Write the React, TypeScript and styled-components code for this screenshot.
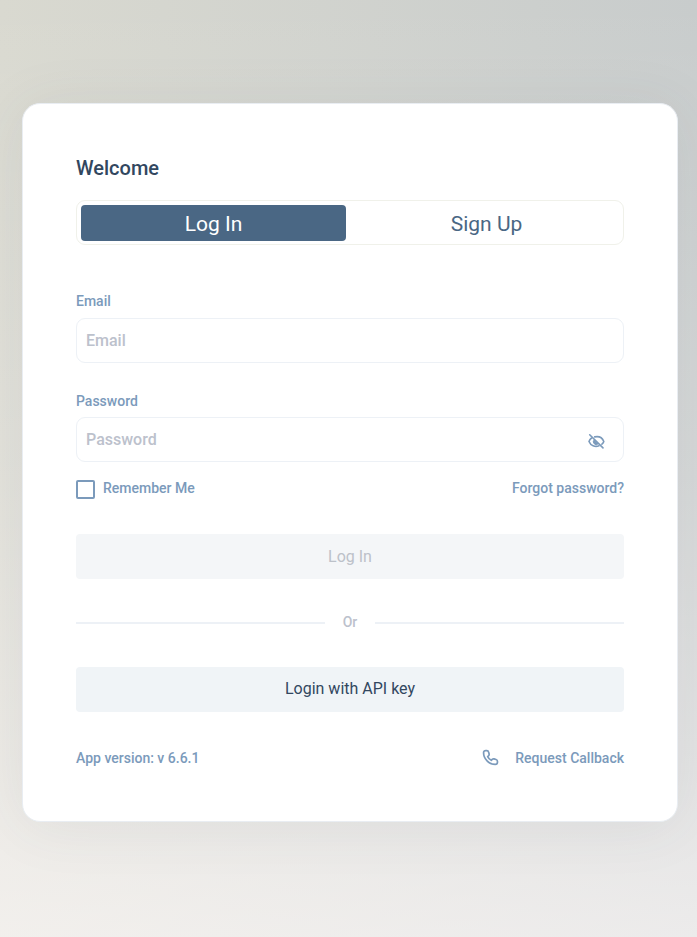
import React, { useState } from "react";
import styled, { createGlobalStyle } from "styled-components";

const GlobalStyle = createGlobalStyle`
  *, *::before, *::after { box-sizing: border-box; }
  body { margin: 0; }
  body, button, input { font-family: Roboto, "Liberation Sans", sans-serif; }
`;

const Page = styled.main`
  min-height: 100vh;
  padding: 103px 19px 64px 22px;
  background:
    linear-gradient(to bottom, rgba(255, 251, 251, 0) 0%, rgba(255, 251, 251, 0.25) 50%, rgba(255, 251, 251, 0.66) 100%),
    linear-gradient(to right, #d9d9d0 0%, #c8cccc 100%);
`;

const Card = styled.section`
  display: flex;
  flex-direction: column;
  max-width: 656px;
  margin: 0 auto;
  padding: 52px 53px 55px;
  background: #ffffff;
  border: 1px solid #e9edf2;
  border-radius: 18px;
  box-shadow: 0 4px 60px rgba(70, 80, 90, 0.08);
`;

const Title = styled.h1`
  margin: 0 0 20px;
  font-size: 20px;
  line-height: 24px;
  font-weight: 500;
  color: #32475f;
`;

const Tabs = styled.div`
  display: grid;
  grid-template-columns: 1fr 1fr;
  gap: 8px;
  height: 45px;
  padding: 4px 4px 3px;
  border: 1px solid #f0f1ea;
  border-radius: 9px;
`;

const Tab = styled.button<{ $active: boolean }>`
  padding: 2px 0 0;
  border: 0;
  border-radius: 4px;
  background: ${(p) => (p.$active ? "#4a6784" : "transparent")};
  color: ${(p) => (p.$active ? "#ffffff" : "#4a6784")};
  font-size: 21px;
  line-height: 24px;
  cursor: pointer;
`;

const Form = styled.form`
  display: flex;
  flex-direction: column;
  margin-top: 48px;
`;

const Field = styled.div`
  display: flex;
  flex-direction: column;
  gap: 9px;
  & + & { gap: 8px; margin-top: 30px; }
`;

const Label = styled.label`
  font-size: 14px;
  line-height: 16px;
  font-weight: 500;
  color: #7b9abb;
`;

const InputFrame = styled.div`
  display: flex;
  align-items: center;
  height: 45px;
  padding: 0 18px 0 9px;
  border: 1px solid #edf1f6;
  border-radius: 9px;
`;

const Input = styled.input`
  flex: 1;
  min-width: 0;
  padding: 0;
  border: 0;
  outline: 0;
  background: transparent;
  font-size: 16px;
  line-height: 20px;
  font-weight: 500;
  color: #32475f;
  &::placeholder { color: #bcc1cc; opacity: 1; }
`;

const IconButton = styled.button`
  display: flex;
  padding: 4px 0 0;
  border: 0;
  background: transparent;
  color: #7b9abb;
  cursor: pointer;
`;

const Row = styled.div`
  display: flex;
  align-items: center;
  justify-content: space-between;
`;

const Options = styled(Row)`
  align-items: flex-start;
  margin: 18px 0 35px;
`;

const Remember = styled(Label)`
  display: flex;
  align-items: flex-start;
  gap: 8px;
`;

const Checkbox = styled.input`
  appearance: none;
  width: 19px;
  height: 19px;
  margin: 0;
  border: 2px solid #7b9abb;
  border-radius: 2px;
  &:checked { background: #7b9abb; box-shadow: inset 0 0 0 2px #ffffff; }
`;

const Link = styled.a`
  display: flex;
  align-items: center;
  gap: 16px;
  font-size: 14px;
  line-height: 16px;
  font-weight: 500;
  color: #7b9abb;
  text-decoration: none;
`;

const ActionButton = styled.button<{ $muted?: boolean }>`
  height: 45px;
  padding: ${(p) => (p.$muted ? "0" : "0 0 2px")};
  border: 0;
  border-radius: 4px;
  background: ${(p) => (p.$muted ? "#f4f6f8" : "#f0f4f7")};
  color: ${(p) => (p.$muted ? "#bcc1c9" : "#32475f")};
  font-size: 16px;
  line-height: 20px;
`;

const Divider = styled.div`
  display: flex;
  align-items: center;
  gap: 18px;
  margin: 35px 0 37px;
  font-size: 14px;
  line-height: 16px;
  font-weight: 500;
  color: #bcc1cc;
  &::before, &::after { content: ""; flex: 1; height: 2px; margin-top: 2px; background: #edf1f6; }
`;

const Footer = styled(Row)`
  margin-top: 37px;
`;

const Version = styled.span`
  font-size: 14px;
  line-height: 16px;
  font-weight: 500;
  color: #7b9abb;
`;

const PhoneIcon = () => (
  <svg width="17" height="17" viewBox="0 0 24 24" fill="none" stroke="currentColor" strokeWidth="2.4" strokeLinejoin="round" aria-hidden="true">
    <path d="M5.3 2.3h1.5c1.5 0 2.2.7 2.5 2l.7 2.500c.3 1.200 0 2-.8 2.800L8 10.800c1.100 2.300 2.800 4.100 5.100 5.200l1.300-1.300c.8-.8 1.700-1 2.700-.7l2.700.8c1.300.4 2 1.200 2 2.500v1.400c0 1.900-1.300 3.100-3.100 3.100C9.900 21.800 2.200 14 2.200 5.400c0-1.900 1.200-3.100 3.100-3.100Z" />
  </svg>
);

const EyeOffIcon = () => (
  <svg width="17" height="17" viewBox="0 0 17 17" fill="none" stroke="currentColor" strokeWidth="1.6" strokeLinecap="round" aria-hidden="true">
    <path d="M6.7 3.900C11 3 14.300 4.700 15.800 8.500c-.4 1.200-1 2-1.900 2.700M3.600 5C2.300 5.900 1.500 7 1 8.500c1.600 4.100 6 5.800 10 4.300" />
    <path d="M1.700 1.800 15 14.900" />
    <path d="M6.200 6.800A2.800 2.800 0 0 0 10.200 10.800Z" fill="currentColor" strokeWidth="1" />
  </svg>
);

export default function App() {
  const [tab, setTab] = useState("login");
  const [visible, setVisible] = useState(false);
  return (
    <>
      <GlobalStyle />
      <Page>
        <Card>
          <Title>Welcome</Title>
          <Tabs>
            <Tab type="button" aria-pressed={tab === "login"} $active={tab === "login"} onClick={() => setTab("login")}>Log In</Tab>
            <Tab type="button" aria-pressed={tab === "signup"} $active={tab === "signup"} onClick={() => setTab("signup")}>Sign Up</Tab>
          </Tabs>
          <Form onSubmit={(e) => e.preventDefault()}>
            <Field>
              <Label htmlFor="email">Email</Label>
              <InputFrame><Input id="email" type="email" placeholder="Email" /></InputFrame>
            </Field>
            <Field>
              <Label htmlFor="password">Password</Label>
              <InputFrame>
                <Input id="password" type={visible ? "text" : "password"} placeholder="Password" />
                <IconButton type="button" aria-label="Show password" onClick={() => setVisible(!visible)}>
                  <EyeOffIcon />
                </IconButton>
              </InputFrame>
            </Field>
            <Options>
              <Remember htmlFor="remember"><Checkbox id="remember" type="checkbox" />Remember Me</Remember>
              <Link href="#forgot">Forgot password?</Link>
            </Options>
            <ActionButton type="submit" disabled $muted>Log In</ActionButton>
            <Divider>Or</Divider>
            <ActionButton type="button">Login with API key</ActionButton>
          </Form>
          <Footer>
            <Version>App version: v 6.6.1</Version>
            <Link href="#callback"><PhoneIcon />Request Callback</Link>
          </Footer>
        </Card>
      </Page>
    </>
  );
}
